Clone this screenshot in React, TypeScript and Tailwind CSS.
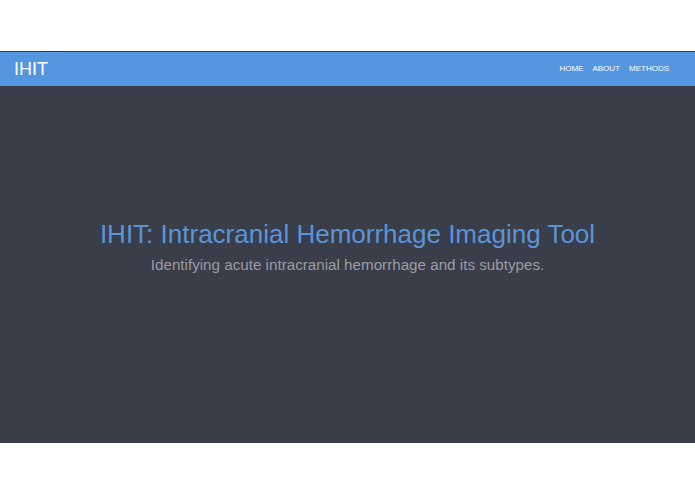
import React from 'react';

const App: React.FC = () => {
  return (
    <div className="w-[695px] h-[494px] bg-white flex flex-col" style={{ fontFamily: '"Liberation Sans", Arial, sans-serif' }}>
      <div className="h-[51px]"></div>
      {/* Navbar */}
      <nav className="h-[35px] bg-[#5596e0] border-t border-[#2f3a4a] flex items-center justify-between pl-[14px] pr-[26px]">
        <span className="text-white text-[18px] leading-none">IHIT</span>
        <div className="flex items-center gap-[9px] text-white text-[8px] leading-none">
          <a>HOME</a>
          <a>ABOUT</a>
          <a>METHODS</a>
        </div>
      </nav>

      {/* Hero */}
      <section className="h-[357px] bg-[#3a3d4a] flex flex-col items-center justify-center pb-[37px]">
        <h1 className="text-[#5a95d8] text-[26px] leading-tight">IHIT: Intracranial Hemorrhage Imaging Tool</h1>
        <p className="text-[#9a9ca3] text-[15.2px] leading-tight mt-[4px]">Identifying acute intracranial hemorrhage and its subtypes.</p>
      </section>
    </div>
  );
};

export default App;
